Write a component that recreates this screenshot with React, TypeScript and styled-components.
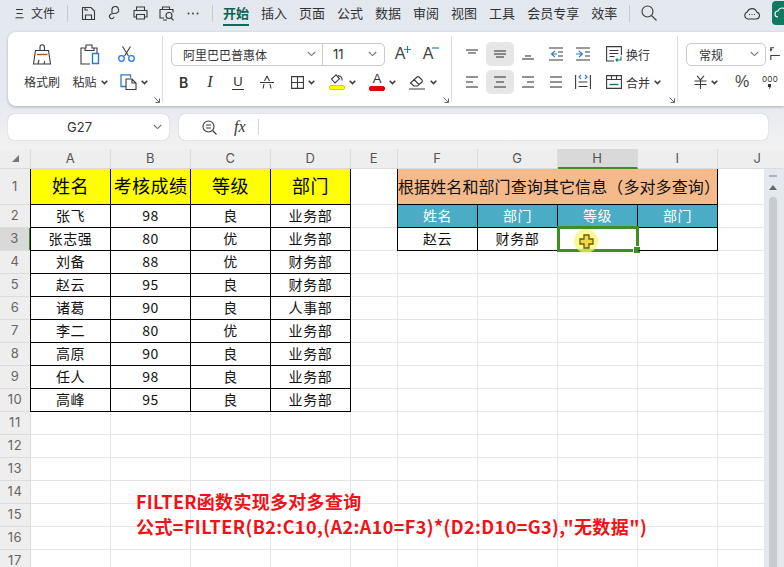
import React from "react";
import styled, { createGlobalStyle } from "styled-components";

const Global = createGlobalStyle`
  html, body { margin: 0; padding: 0; }
  body { font-family: "Noto Sans CJK SC", "Noto Sans", sans-serif; color: #333; }
`;

const Page = styled.div`
  width: 784px; height: 567px; overflow: hidden; display: flex; flex-direction: column;
  background: linear-gradient(#e3e8ef, #e6eaf0 100px, #f1f1f1 149px);
`;

/* ---------- title bar ---------- */
const TitleBar = styled.div`
  height: 26px; flex: none; display: flex; align-items: center; font-size: 13px; position: relative;
`;
const MenuGlyph = styled.svg`margin-left: 15px; width: 9px; height: 11px;`;
const FileLabel = styled.span`margin-left: 7px; width: 24px; line-height: 24px; font-size: 12px;`;
const VBar = styled.i<{ $l: number }>`
  width: 1px; height: 17px; background: #c5cad0; margin-left: ${p => p.$l}px; flex: none;
`;
const QuickSlot = styled.span<{ $w: number }>`
  width: ${p => p.$w}px; display: flex; justify-content: center; align-items: center; flex: none;
`;
const Tabs = styled.nav`display: flex; gap: 12px; margin-left: 10px;`;
const Tab = styled.span<{ $on?: boolean }>`
  font-size: 13px; line-height: 26px; height: 26px; box-sizing: border-box; white-space: nowrap;
  color: ${p => (p.$on ? "#0d6256" : "#333")};
  font-weight: ${p => (p.$on ? 700 : 400)};
  border-bottom: 2px solid ${p => (p.$on ? "#0f6b5e" : "transparent")};
`;
const TitleRight = styled.div`margin-left: auto; display: flex; align-items: center;`;
const ShareBtn = styled.span`
  width: 12px; height: 24px; margin-left: 12px; border-radius: 4px 0 0 4px; background: #10795f;
  display: flex; align-items: center; justify-content: flex-start; padding-left: 2px; box-sizing: border-box;
  overflow: hidden;
`;

/* ---------- ribbon ---------- */
const Ribbon = styled.section`
  flex: none; height: 74px; margin: 6px 0 0 8px; background: #fff; border-radius: 8px 0 0 8px;
  box-shadow: 0 1px 3px rgba(90, 95, 105, .45); display: flex;
`;
const Group = styled.div<{ $w: number; $pl: number; $end?: boolean }>`
  position: relative; flex: none; width: ${p => p.$w}px; box-sizing: border-box;
  padding: 10px 0 0 ${p => p.$pl}px; display: flex; flex-direction: column; gap: 4px;
  &::after {
    content: ""; display: ${p => (p.$end ? "none" : "block")}; position: absolute; right: 0; top: 4px; bottom: 4px;
    width: 1px; background: #dcdcdc;
  }
`;
const Row = styled.div`display: flex; align-items: center; height: 24px; font-size: 12px; white-space: nowrap;`;
const Slot = styled.span<{ $w: number; $on?: boolean }>`
  flex: none; width: ${p => p.$w}px; height: 24px; display: flex; align-items: center; justify-content: center;
  gap: 4px; border-radius: 5px; background: ${p => (p.$on ? "#e6e6e6" : "transparent")};
`;
const RaisedLabel = styled.span`margin-bottom: 2px;`;
const WideSlot = styled.span`
  flex: none; margin-left: 9px; display: flex; align-items: center; gap: 4px; font-size: 12px;
`;
const Launcher = styled.svg`position: absolute; right: 3px; bottom: 3px; width: 6px; height: 6px;`;

const Combo = styled.div`
  flex: none; height: 23px; width: 214px; box-sizing: border-box; border: 1px solid #cbcbcb; border-radius: 5px;
  display: flex; align-items: center; font-size: 12px;
`;
const ComboFont = styled.span`
  width: 151px; height: 100%; box-sizing: border-box; padding: 0 6px 0 11px; border-right: 1px solid #cbcbcb;
  display: flex; align-items: center; justify-content: space-between;
`;
const ComboSize = styled.span`
  flex: 1; padding: 0 7px 0 10px; display: flex; align-items: center; justify-content: space-between;
  font: 13px "Inter", sans-serif;
`;
const FormatSelect = styled.div`
  flex: none; width: 80px; height: 23px; box-sizing: border-box; border: 1px solid #cbcbcb; border-radius: 5px;
  display: flex; align-items: center; justify-content: space-between; padding: 0 6px 0 12px; font-size: 12px;
`;
const BigA = styled.span`font: 16px/20px "Liberation Sans", sans-serif; color: #444; margin-right: -1px;`;
const Mark = styled.svg`width: 7px; height: 7px; margin: -9px 0 0 -4px;`;
const Bold = styled.span`font: 600 14px "Inter", sans-serif; color: #333;`;
const Ital = styled.span`font: italic 16px "Liberation Serif", serif; color: #333;`;
const Under = styled.span`
  font: 13px/14px "Liberation Sans", sans-serif; color: #333; border-bottom: 1px solid #333; padding: 0 1px;
`;
const ColorStack = styled.span`display: flex; flex-direction: column; align-items: center; width: 16px;`;
const ColorA = styled.span`font: 13px/12px "Liberation Sans", sans-serif; color: #333;`;
const ColorBar = styled.i<{ $c: string; $b: string }>`
  width: 16px; height: 5px; margin-top: 1px; border-radius: 2px; background: ${p => p.$c}; border: 1px solid ${p => p.$b};
  box-sizing: border-box;
`;
const Percent = styled.span`font: 16px "Liberation Sans", sans-serif; color: #444;`;
const Thousand = styled.span`
  display: flex; flex-direction: column; align-items: center; gap: 1px;
  font: 8px/8px "Inter", sans-serif; color: #333; letter-spacing: .3px;
`;

/* ---------- formula bar ---------- */
const FormulaRow = styled.div`flex: none; display: flex; gap: 10px; margin: 8px 0 0 8px; height: 26px;`;
const NameBox = styled.div`
  width: 161px; background: #fff; border-radius: 6px; box-shadow: 0 0 1px rgba(0, 0, 0, .35);
  display: flex; align-items: center; font: 13px "Inter", sans-serif; color: #333; padding-right: 7px; box-sizing: border-box;
`;
const NameText = styled.span`flex: 1; text-align: center; padding-right: 2px;`;
const FormulaBox = styled.div`
  width: 589px; background: #fff; border-radius: 6px; box-shadow: 0 0 1px rgba(0, 0, 0, .35);
  display: flex; align-items: center; padding-left: 23px; box-sizing: border-box;
`;
const Fx = styled.span`
  font: italic 16px "Liberation Serif", serif; color: #333; margin-left: 17px; width: 14px;
`;
const FormulaDivider = styled.i`width: 1px; height: 16px; background: #d6d6d6; margin-left: 10px;`;

/* ---------- sheet ---------- */
const Sheet = styled.div`
  position: relative; flex: 1; margin-top: 9px; min-height: 0; overflow: hidden; background: #fff;
  display: grid; align-content: start;
  grid-template-columns: 31px repeat(4, 80px) 47px repeat(5, 80px);
  grid-template-rows: 20px 36px repeat(16, 23px);
  font-size: 14px; letter-spacing: .6px; color: #111;
`;
const Corner = styled.div`
  background: #eee; border-right: 1px solid #dcdcdc; border-bottom: 1px solid #dcdcdc; box-sizing: border-box;
  display: flex; align-items: center; justify-content: center;
`;
const ColHead = styled.div<{ $on?: boolean }>`
  background: ${p => (p.$on ? "#d9d9d9" : "#eee")}; color: #555; box-sizing: border-box;
  border-right: 1px solid #dcdcdc;
  border-bottom: ${p => (p.$on ? "2px solid #3d8f22" : "1px solid #dcdcdc")};
  font: 13px/19px "Inter", sans-serif; text-align: center;
`;
const RowHead = styled.div<{ $on?: boolean }>`
  background: ${p => (p.$on ? "#d9d9d9" : "#eee")}; color: #666; box-sizing: border-box;
  border-bottom: 1px solid #dcdcdc; padding-bottom: 2px;
  border-right: ${p => (p.$on ? "2px solid #3d8f22" : "1px solid #dcdcdc")};
  font: 13px "Inter", sans-serif; display: flex; align-items: center; justify-content: center;
`;
const Cell = styled.div`
  border-right: 1px solid #e6e6e6; border-bottom: 1px solid #e6e6e6; box-sizing: border-box;
`;
const Boxed = styled.div<{ $first?: boolean }>`
  position: relative; box-sizing: border-box; border-right: 1px solid #000; border-bottom: 1px solid #000;
  padding-bottom: 2px;
  display: flex; align-items: center; justify-content: center; white-space: nowrap; line-height: 20px;
  box-shadow: ${p => (p.$first ? "-1px 0 0 #000" : "none")};
`;
const YellowCell = styled(Boxed)`background: #ff0; font-size: 18px; letter-spacing: .4px; color: #000; padding-bottom: 3px;`;
const TitleCell = styled(Boxed)`
  grid-column: span 4; background: #f4ba8c; font-size: 16px; letter-spacing: .1px; color: #111; justify-content: flex-start;
`;
const BlueCell = styled(Boxed)`background: #4bacc6; color: #fff;`;
const Selection = styled.div`
  position: absolute; left: -1px; top: -2px; right: -2px; bottom: -2px; border: 3px solid #3d8f22;
`;
const Handle = styled.i`
  position: absolute; right: -4px; bottom: -4px; width: 6px; height: 6px; background: #3d8f22; border: 1px solid #fff;
  box-sizing: content-box; margin: -1px;
`;
const CursorHalo = styled.div`
  position: absolute; left: 16px; top: 1px; width: 24px; height: 24px; border-radius: 50%;
  background: rgba(250, 245, 110, .72); display: flex; align-items: center; justify-content: center;
`;
const Note = styled.div`
  position: absolute; left: 136px; top: 340px; font-size: 18px; line-height: 25px; font-weight: 700;
  color: #f01218; white-space: nowrap;
`;
const NoteLine = styled.div<{ $ls: number }>`letter-spacing: ${p => p.$ls}px;`;
const Scroll = styled.div`
  position: absolute; right: 0; top: 20px; bottom: 0; width: 20px; background: #e4e8ef;
  display: flex; flex-direction: column; align-items: flex-start; padding-left: 5px; box-sizing: border-box;
  border-right: 3px solid #e4e8ef;
`;
const ScrollDash = styled.i`width: 8px; height: 2px; margin-top: 6px; background: #aeb2b8;`;
const ScrollArrow = styled.i`
  margin-top: 8px; width: 0; height: 0; border: 4px solid transparent; border-top: 0; border-bottom: 5px solid #666;
`;
const ScrollThumb = styled.i`flex: 1; width: 8px; margin-top: 7px; background: #c8ccd1; border-radius: 4px 4px 0 0;`;

/* ---------- icons ---------- */
const S = styled.svg`display: block; flex: none; fill: none; stroke: #3a3a3a; stroke-width: 1.1;`;
const Chev = ({ w = 9, c = "#777" }: { w?: number; c?: string }) => (
  <S width={w} height={6} viewBox="0 0 9 6" style={{ stroke: c }}><path d="M.8 1l3.700 3.600L8.200 1" /></S>
);
const SmallChev = () => (
  <S width={7} height={5} viewBox="0 0 7 5" style={{ strokeWidth: 1.5 }}><path d="M.7.8l2.800 2.800L6.300.8" /></S>
);
const Corn = () => (
  <Launcher viewBox="0 0 6 6" fill="none" stroke="#666"><path d="M.5.5l5 5M5.500 1.500v4h-4" /></Launcher>
);
const Lines = ({ rows }: { rows: [number, number, number][] }) => (
  <S width={16} height={16} viewBox="0 0 16 16">
    {rows.map(([x1, x2, y], i) => <path key={i} d={`M${x1} ${y}H${x2}`} />)}
  </S>
);

export default function App() {
  const left = [
    ["张飞", "98", "良", "业务部"], ["张志强", "80", "优", "业务部"], ["刘备", "88", "优", "财务部"],
    ["赵云", "95", "良", "财务部"], ["诸葛", "90", "良", "人事部"], ["李二", "80", "优", "业务部"],
    ["高原", "90", "良", "业务部"], ["任人", "98", "良", "业务部"], ["高峰", "95", "良", "业务部"],
  ];
  const cols = ["A", "B", "C", "D", "E", "F", "G", "H", "I", "J"];
  const blanks = (n: number, k: string) => Array.from({ length: n }, (_, i) => <Cell key={k + i} />);

  return (
    <Page>
      <Global />
      <TitleBar>
        <MenuGlyph viewBox="0 0 9 11" fill="none" stroke="#333"><path d="M1 1.500h7M1.500 5.500h6M.5 9.800h8" /></MenuGlyph>
        <FileLabel>文件</FileLabel>
        <VBar $l={12} />
        <QuickSlot $w={41}>
          <S width={15} height={15} viewBox="0 0 15 15"><path d="M1.500 1.500h8.500l3.500 3.500v8.500h-12zM4.500 13.500V9h6v4.500M4 1.500V4h3" /></S>
        </QuickSlot>
        <QuickSlot $w={11}>
          <S width={13} height={15} viewBox="0 0 13 15"><path d="M4 7V4a3 3 0 0 1 6.500-.5C11.500 6 9 7.500 6 7.500c-3 0-5 1.500-4.500 3.500a2.300 2.300 0 0 0 4.500-.3" /></S>
        </QuickSlot>
        <QuickSlot $w={41}>
          <S width={15} height={14} viewBox="0 0 15 14"><path d="M3.500 4V1h8v3M3.500 11H1V4.500h13V11h-2.500M3.500 8.500h8v4.500h-8z" /></S>
        </QuickSlot>
        <QuickSlot $w={11}>
          <S width={16} height={15} viewBox="0 0 16 15"><path d="M3.500 3.500V1h7v2.500M5 12H1V3.500h13v3M8 14H4" /><circle cx="10" cy="9.500" r="3" /><path d="M12.300 12l2.200 2.300" /></S>
        </QuickSlot>
        <QuickSlot $w={41}>
          <S width={12} height={3} viewBox="0 0 12 3" style={{ stroke: "none", fill: "#444" }}><circle cx="1.500" cy="1.500" r="1" /><circle cx="6" cy="1.500" r="1" /><circle cx="10.500" cy="1.500" r="1" /></S>
        </QuickSlot>
        <VBar $l={-1} />
        <Tabs>
          <Tab $on>开始</Tab><Tab>插入</Tab><Tab>页面</Tab><Tab>公式</Tab><Tab>数据</Tab><Tab>审阅</Tab>
          <Tab>视图</Tab><Tab>工具</Tab><Tab>会员专享</Tab><Tab>效率</Tab>
        </Tabs>
        <VBar $l={12} />
        <QuickSlot $w={38}>
          <S width={16} height={16} viewBox="0 0 16 16"><circle cx="6.500" cy="6.500" r="5.500" /><path d="M10.500 10.500l5 5" /></S>
        </QuickSlot>
        <TitleRight>
          <S width={16} height={13} viewBox="0 0 16 13"><path d="M4 12h8a3.500 3.500 0 0 0 .8-6.900A5 5 0 0 0 3.300 5 3.600 3.600 0 0 0 4 12z" /><path d="M5 7.500h1M7.500 7.500h1M10 7.500h1" /></S>
          <ShareBtn>
            <S width={14} height={12} viewBox="0 0 14 12" style={{ stroke: "#fff" }}><path d="M4 10a3 3 0 0 1 0-6 4.500 4.500 0 0 1 8-1" /></S>
          </ShareBtn>
        </TitleRight>
      </TitleBar>

      <Ribbon>
        <Group $w={155} $pl={10}>
          <Row>
            <Slot $w={48}>
              <S width={20} height={21} viewBox="0 0 20 21">
                <path d="M8 6.500V3a2.200 2.200 0 0 1 4.400 0v3.500M3.500 6.500h13l2 13.500H1.500zM6 20l1-4M12 20l.6-3" />
                <path d="M5 10.500h10.500" style={{ stroke: "#a5541c", strokeWidth: 1.4 }} />
              </S>
            </Slot>
            <Slot $w={48}>
              <S width={20} height={21} viewBox="0 0 20 21">
                <path d="M10 20H1V4h5V1h6v3h5v6M5 4v2.500h9V4" />
                <path d="M12.500 9.500h6v10h-6z" style={{ stroke: "#2b7ad6", strokeWidth: 1.4 }} />
              </S>
            </Slot>
            <Slot $w={24}>
              <S width={17} height={16} viewBox="0 0 17 16">
                <path d="M4.500.5L10.500 10M12.500.5L6.500 10" />
                <g style={{ stroke: "#2b7ad6", strokeWidth: 1.3 }}><circle cx="3.500" cy="12.500" r="2.800" /><circle cx="13.500" cy="12.500" r="2.800" /></g>
              </S>
            </Slot>
          </Row>
          <Row>
            <Slot $w={48}><RaisedLabel>格式刷</RaisedLabel></Slot>
            <Slot $w={48}><RaisedLabel>粘贴</RaisedLabel><SmallChev /></Slot>
            <Slot $w={39}>
              <S width={17} height={16} viewBox="0 0 17 16">
                <path d="M6 12.500H1V.8h9.500v3" style={{ stroke: "#2b7ad6", strokeWidth: 1.3 }} />
                <path d="M6 5h6l4 4v6.500H6zM12 5v4h4" />
              </S>
              <SmallChev />
            </Slot>
          </Row>
          <Corn />
        </Group>

        <Group $w={289} $pl={8}>
          <Row>
            <Combo>
              <ComboFont>阿里巴巴普惠体<Chev /></ComboFont>
              <ComboSize>11<Chev /></ComboSize>
            </Combo>
            <Slot $w={4} />
            <Slot $w={28}>
              <BigA>A</BigA>
              <Mark viewBox="0 0 7 7" fill="none" stroke="#2b7ad6" strokeWidth="1.2"><path d="M0 3.500h7M3.500 0v7" /></Mark>
            </Slot>
            <Slot $w={28}>
              <BigA>A</BigA>
              <Mark viewBox="0 0 7 7" fill="none" stroke="#2b7ad6" strokeWidth="1.2"><path d="M0 2h7" /></Mark>
            </Slot>
          </Row>
          <Row>
            <Slot $w={25}><Bold>B</Bold></Slot>
            <Slot $w={28}><Ital>I</Ital></Slot>
            <Slot $w={28}><Under>U</Under></Slot>
            <Slot $w={29}>
              <S width={14} height={14} viewBox="0 0 14 14"><path d="M7 1L4.500 6M7 1l2.500 5M4 9l-1 4.500M10 9l1 4.500M0 7.500h14" /></S>
            </Slot>
            <Slot $w={44}>
              <S width={13} height={13} viewBox="0 0 13 13"><path d="M.6.6h11.800v11.800H.6zM6.500.6v11.800M.6 6.500h11.800" /></S>
              <SmallChev />
            </Slot>
            <Slot $w={35}>
              <ColorStack>
                <S width={14} height={10} viewBox="0 0 14 10"><path d="M6 .8L1.500 5 5 9l4.500-4.200zM8 1.500c2 .5 4.500 2 4 5" /></S>
                <ColorBar $c="#ff0" $b="#d3d300" />
              </ColorStack>
              <SmallChev />
            </Slot>
            <Slot $w={45}>
              <ColorStack>
                <ColorA>A</ColorA>
                <ColorBar $c="#e60000" $b="#e60000" />
              </ColorStack>
              <SmallChev />
            </Slot>
            <Slot $w={35}>
              <S width={17} height={15} viewBox="0 0 17 15"><path d="M1.500 8L8 2a1.500 1.500 0 0 1 2 0l3 3a1.500 1.500 0 0 1 0 2l-4.500 4H5zM5 4.500L10 9.500M0 14h16" /></S>
              <SmallChev />
            </Slot>
          </Row>
          <Corn />
        </Group>

        <Group $w={226} $pl={6}>
          <Row>
            <Slot $w={28}><Lines rows={[[2, 14, 4], [4, 12, 7]]} /></Slot>
            <Slot $w={28} $on><Lines rows={[[2, 14, 5], [2, 14, 8], [4, 12, 11]]} /></Slot>
            <Slot $w={28}><Lines rows={[[5, 11, 10], [2, 14, 13]]} /></Slot>
            <Slot $w={27}>
              <S width={14} height={14} viewBox="0 0 14 14"><path d="M0 1h14M9 5h5M9 9h5M0 13h14" /><path d="M6 4L2.500 7 6 10M2.500 7H8" style={{ stroke: "#2b7ad6" }} /></S>
            </Slot>
            <Slot $w={28}>
              <S width={14} height={14} viewBox="0 0 14 14"><path d="M0 1h14M9 5h5M9 9h5M0 13h14" /><path d="M3 4l3.500 3L3 10M6.500 7H0" style={{ stroke: "#2b7ad6" }} /></S>
            </Slot>
            <WideSlot>
              <S width={16} height={16} viewBox="0 0 16 16"><path d="M8 15H.6V.6h14.800V9M3.500 4.500h9M3.500 7.500h9M3.500 10.500h5" /><path d="M15 10.500v3.500h-5M11.500 12.500L10 14l1.500 1.500" style={{ stroke: "#0f7a63" }} /></S>
              换行
            </WideSlot>
          </Row>
          <Row>
            <Slot $w={28}><Lines rows={[[2, 14, 3], [2, 9, 8], [2, 14, 13]]} /></Slot>
            <Slot $w={28} $on><Lines rows={[[2, 14, 3], [4, 12, 8], [2, 14, 13]]} /></Slot>
            <Slot $w={28}><Lines rows={[[2, 14, 3], [7, 14, 8], [2, 14, 13]]} /></Slot>
            <Slot $w={27}><Lines rows={[[2, 14, 3], [2, 14, 8], [2, 14, 13]]} /></Slot>
            <Slot $w={28}>
              <S width={16} height={16} viewBox="0 0 16 16"><path d="M.6 1v14M15.400 1v14M3.500 8h9M3.500 12.500h9" /><path d="M6 1L4 3l2 2M10 1l2 2-2 2" style={{ stroke: "#2b7ad6" }} /></S>
            </Slot>
            <WideSlot>
              <S width={16} height={14} viewBox="0 0 16 14"><path d="M.6.6h14.800v12.800H.6zM.6 4.500h14.800M5.500.6v4M10.500.6v4" /><path d="M3.500 9.500h9" style={{ stroke: "#0f7a63", strokeWidth: 1.4 }} /></S>
              合并<SmallChev />
            </WideSlot>
          </Row>
          <Corn />
        </Group>

        <Group $w={106} $pl={8} $end>
          <Row>
            <FormatSelect>常规<Chev /></FormatSelect>
            <Slot $w={4} />
            <S width={10} height={14} viewBox="0 0 10 14"><path d="M4 .8H.8v3.500M.8 13V8.500h9" /><path d="M2 2L.5 3.500" /></S>
          </Row>
          <Row>
            <Slot $w={40}>
              <S width={13} height={14} viewBox="0 0 13 14"><path d="M3 .8l3.500 4 3.500-4M.5 6h12M.5 9.500h12M6.500 5v9" /></S>
              <SmallChev />
            </Slot>
            <Slot $w={32}><Percent>%</Percent></Slot>
            <Slot $w={24}>
              <Thousand>
                000
                <S width={3} height={5} viewBox="0 0 3 5" style={{ stroke: "none", fill: "#333" }}><path d="M0 0h3v2.500L1.500 5 1 4.500 1.500 3H0z" /></S>
              </Thousand>
            </Slot>
          </Row>
        </Group>
      </Ribbon>

      <FormulaRow>
        <NameBox>
          <NameText>G27</NameText>
          <Chev />
        </NameBox>
        <FormulaBox>
          <S width={15} height={15} viewBox="0 0 15 15"><circle cx="6.500" cy="6.500" r="5.500" /><path d="M10.500 10.500l4 4M4 5h5M4 8h5" /></S>
          <Fx>fx</Fx>
          <FormulaDivider />
        </FormulaBox>
      </FormulaRow>

      <Sheet>
        <Corner>
          <S width={7} height={7} viewBox="0 0 7 7" style={{ stroke: "none", fill: "#777" }}><path d="M7 0v7H0z" /></S>
        </Corner>
        {cols.map(c => <ColHead key={c} $on={c === "H"}>{c}</ColHead>)}

        <RowHead>1</RowHead>
        <YellowCell $first>姓名</YellowCell>
        <YellowCell>考核成绩</YellowCell>
        <YellowCell>等级</YellowCell>
        <YellowCell>部门</YellowCell>
        <Cell />
        <TitleCell $first>根据姓名和部门查询其它信息（多对多查询）</TitleCell>
        <Cell />

        {left.map((r, i) => {
          const n = i + 2;
          return (
            <React.Fragment key={n}>
              <RowHead $on={n === 3}>{n}</RowHead>
              {r.map((t, j) => <Boxed key={j} $first={j === 0}>{t}</Boxed>)}
              <Cell />
              {n === 2 && (
                <>
                  <BlueCell $first>姓名</BlueCell><BlueCell>部门</BlueCell><BlueCell>等级</BlueCell><BlueCell>部门</BlueCell>
                </>
              )}
              {n === 3 && (
                <>
                  <Boxed $first>赵云</Boxed>
                  <Boxed>财务部</Boxed>
                  <Boxed>
                    <Selection><Handle /></Selection>
                    <CursorHalo>
                      <S width={15} height={15} viewBox="0 0 15 15" style={{ stroke: "#6b5a10", fill: "#efd84a", strokeWidth: 1.3 }}>
                        <path d="M5 1h5v4h4v5h-4v4H5v-4H1V5h4z" />
                      </S>
                    </CursorHalo>
                  </Boxed>
                  <Boxed />
                </>
              )}
              {n > 3 && blanks(4, `r${n}`)}
              <Cell />
            </React.Fragment>
          );
        })}
        {Array.from({ length: 7 }, (_, i) => (
          <React.Fragment key={i}>
            <RowHead>{i + 11}</RowHead>
            {blanks(10, `e${i}`)}
          </React.Fragment>
        ))}

        <Note>
          <NoteLine $ls={0.3}>FILTER函数实现多对多查询</NoteLine>
          <NoteLine $ls={0.42}>公式=FILTER(B2:C10,(A2:A10=F3)*(D2:D10=G3),"无数据")</NoteLine>
        </Note>
        <Scroll>
          <ScrollDash />
          <ScrollArrow />
          <ScrollThumb />
        </Scroll>
      </Sheet>
    </Page>
  );
}
